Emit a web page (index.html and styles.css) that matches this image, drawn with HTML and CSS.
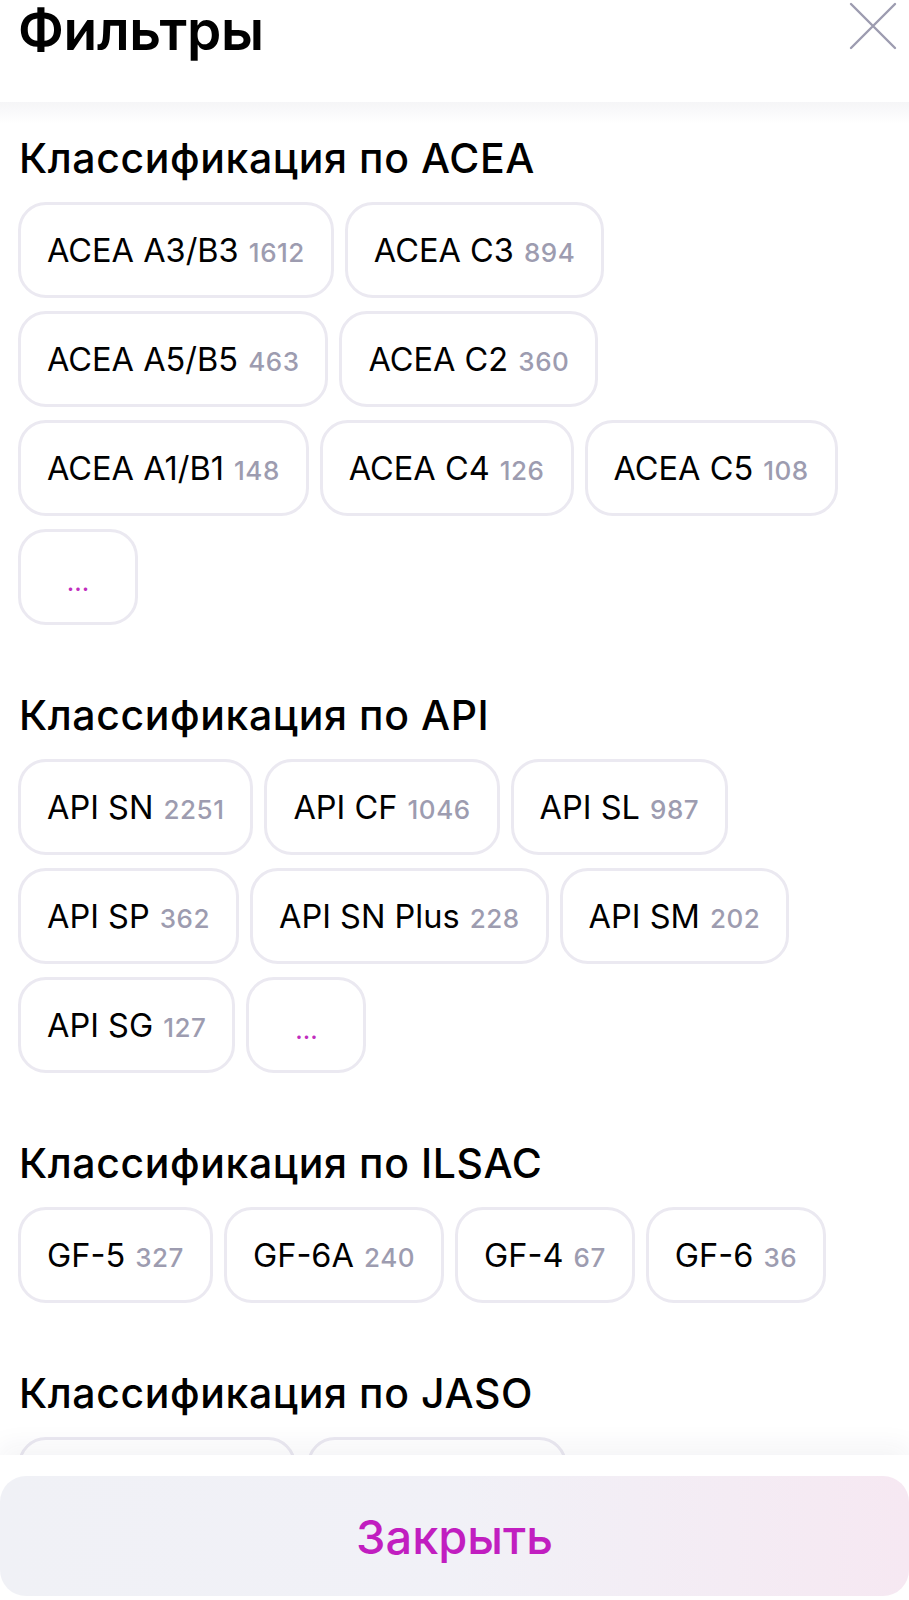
FILE: index.html
```html
<!DOCTYPE html>
<html lang="ru">
<head>
    <meta charset="UTF-8">
    <meta name="viewport" content="width=device-width, initial-scale=1.0">
    <title>Фильтры</title>
    <link rel="stylesheet" href="styles.css">
</head>
<body>

    <div class="header">
        <h1>Фильтры</h1>
        <button class="close" type="button" aria-label="Закрыть">
            <svg width="48" height="48" viewBox="0 0 48 48">
                <path d="M2 2 L46 46 M46 2 L2 46" stroke="#9d9cb0" stroke-width="2.4" stroke-linecap="round" fill="none"/>
            </svg>
        </button>
    </div>

    <div class="content">

        <div class="section">
            <h2>Классификация по ACEA</h2>
            <div class="chips">
                <span class="chip">ACEA A3/B3 <span class="count">1612</span></span>
                <span class="chip">ACEA C3 <span class="count">894</span></span>
                <span class="chip">ACEA A5/B5 <span class="count">463</span></span>
                <span class="chip">ACEA C2 <span class="count">360</span></span>
                <span class="chip">ACEA A1/B1 <span class="count">148</span></span>
                <span class="chip">ACEA C4 <span class="count">126</span></span>
                <span class="chip">ACEA C5 <span class="count">108</span></span>
                <span class="chip more">...</span>
            </div>
        </div>

        <div class="section">
            <h2>Классификация по API</h2>
            <div class="chips">
                <span class="chip">API SN <span class="count">2251</span></span>
                <span class="chip">API CF <span class="count">1046</span></span>
                <span class="chip">API SL <span class="count">987</span></span>
                <span class="chip">API SP <span class="count">362</span></span>
                <span class="chip">API SN Plus <span class="count">228</span></span>
                <span class="chip">API SM <span class="count">202</span></span>
                <span class="chip">API SG <span class="count">127</span></span>
                <span class="chip more">...</span>
            </div>
        </div>

        <div class="section">
            <h2>Классификация по ILSAC</h2>
            <div class="chips">
                <span class="chip">GF-5 <span class="count">327</span></span>
                <span class="chip">GF-6A <span class="count">240</span></span>
                <span class="chip">GF-4 <span class="count">67</span></span>
                <span class="chip">GF-6 <span class="count">36</span></span>
            </div>
        </div>

        <div class="section">
            <h2>Классификация по JASO</h2>
            <div class="chips">
                <span class="chip">JASO MA2 <span class="count">176</span></span>
                <span class="chip">JASO MB <span class="count">104</span></span>
            </div>
        </div>

    </div>

    <div class="footer">
        <button class="btn-close" type="button">Закрыть</button>
    </div>

</body>
</html>
```

FILE: styles.css
```css
/* Base */
body {
    margin: 0;
    padding: 0;
    background-color: #fff;
    color: #000;
    font-family: Inter, "Liberation Sans", Arial, sans-serif;
}

/* Header */
.header {
    height: 102px;
    display: flex;
    justify-content: space-between;
    align-items: flex-start;
    padding: 0 12px 0 18px;
}

.header h1 {
    margin: 0;
    font-size: 55px;
    font-weight: 600;
    line-height: 60px;
    letter-spacing: -0.3px;
}

.close {
    margin-top: 2px;
    padding: 0;
    border: none;
    background: none;
    cursor: pointer;
}

/* Content */
.content {
    padding: 34px 18px 0;
    background: linear-gradient(to bottom, #f5f5f7, #fff 22px) no-repeat;
}

.section + .section {
    margin-top: 68px;
}

.section h2 {
    margin: 0 0 22px 1px;
    font-size: 41px;
    font-weight: 500;
    line-height: 44px;
    letter-spacing: 0.6px;
}

.chips {
    display: flex;
    flex-wrap: wrap;
    gap: 13px 11px;
}

.chip {
    box-sizing: border-box;
    height: 96px;
    display: inline-flex;
    align-items: center;
    justify-content: center;
    padding: 0 26px;
    border: 3px solid #ebe9f1;
    border-radius: 28px;
    font-size: 32.5px;
    white-space: pre;
}

.chip .count {
    font-size: 26px;
    font-weight: 500;
    letter-spacing: 0.5px;
    color: #9d9cb0;
    margin-left: 1px;
    margin-top: 4px;
}

.chip.more {
    min-width: 120px;
    color: #c12cbd;
    font-size: 26px;
    padding-top: 8px;
}

/* Footer */
.footer {
    position: fixed;
    left: 0;
    right: 0;
    bottom: 0;
    height: 145px;
    box-sizing: border-box;
    padding-top: 21px;
    background-color: #fff;
    box-shadow: 0 -10px 24px rgba(40, 40, 70, 0.05);
}

.btn-close {
    display: block;
    width: 100%;
    height: 120px;
    border: none;
    border-radius: 26px;
    background: linear-gradient(to right, #f0f1f6, #f1f1f7 50%, #f6e8f2);
    color: #c11ec0;
    font-family: Inter, "Liberation Sans", Arial, sans-serif;
    font-size: 47px;
    font-weight: 500;
    cursor: pointer;
}
```
